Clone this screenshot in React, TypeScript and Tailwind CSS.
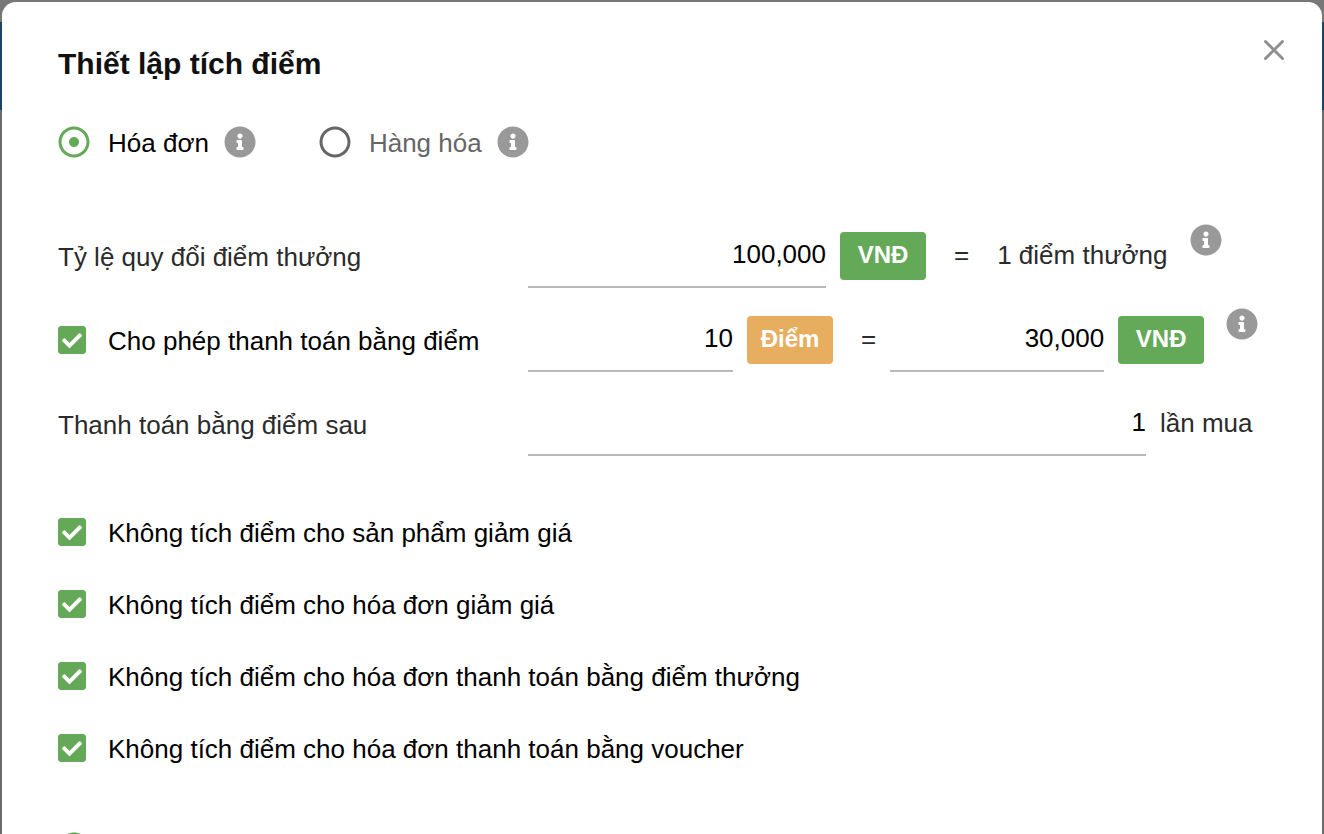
import { useState } from "react";
import type { ReactNode } from "react";
import { FaCheckSquare, FaInfoCircle, FaRegCircle, FaRegDotCircle, FaRegSquare } from "react-icons/fa";

function Info({ label }: { label: string }) {
  return (
    <button type="button" aria-label={label} className="shrink-0 text-[#999999]">
      <FaInfoCircle size={32} />
    </button>
  );
}

function Radio({
  label,
  name,
  checked,
  onChange,
  children,
}: {
  label: string;
  name: string;
  checked: boolean;
  onChange: () => void;
  children?: ReactNode;
}) {
  return (
    <label className={`flex h-10 cursor-pointer items-center gap-[18px] ${checked ? "text-black" : "text-[#666666]"}`}>
      <span className="grid size-8 shrink-0">
        <input
          type="radio"
          name={name}
          aria-label={label}
          checked={checked}
          onChange={onChange}
          className="col-start-1 row-start-1 size-8 appearance-none rounded-full"
        />
        <span className="pointer-events-none col-start-1 row-start-1">
          {checked ? <FaRegDotCircle size={32} className="text-[#64a958]" /> : <FaRegCircle size={32} />}
        </span>
      </span>
      {children && <span className="pt-[2px]">{children}</span>}
    </label>
  );
}

function Checkbox({ label }: { label: string }) {
  const [checked, setChecked] = useState(true);
  return (
    <label className="flex h-10 cursor-pointer items-center gap-[22px] text-black">
      <span className="grid h-8 w-7 shrink-0">
        <input
          type="checkbox"
          checked={checked}
          onChange={() => setChecked(!checked)}
          className="col-start-1 row-start-1 h-8 w-7 appearance-none"
        />
        <span className="pointer-events-none col-start-1 row-start-1 text-[#64a958]">
          {checked ? <FaCheckSquare className="h-8 w-7" /> : <FaRegSquare className="h-8 w-7" />}
        </span>
      </span>
      <span className="pt-[2px]">{label}</span>
    </label>
  );
}

function NumberField({ id, label, value, width }: { id: string; label: string; value: string; width: string }) {
  return (
    <input
      id={id}
      aria-label={label}
      type="text"
      inputMode="numeric"
      defaultValue={value}
      className={`h-16 min-w-0 border-b-2 border-[#b9b9b9] bg-transparent pb-[2px] text-right text-black outline-none ${width}`}
    />
  );
}

function Unit({ children, tone }: { children: ReactNode; tone: string }) {
  return (
    <span
      className={`flex h-12 w-[86px] shrink-0 items-center justify-center rounded pb-[2px] text-[24px] font-bold text-white ${tone}`}
    >
      {children}
    </span>
  );
}

function Row({ label, children }: { label: ReactNode; children: ReactNode }) {
  return (
    <div className="flex h-16 items-center">
      <div className="w-[470px] shrink-0">{label}</div>
      <div className="flex min-w-0 grow items-center">{children}</div>
    </div>
  );
}

const exclusions = [
  "Không tích điểm cho sản phẩm giảm giá",
  "Không tích điểm cho hóa đơn giảm giá",
  "Không tích điểm cho hóa đơn thanh toán bằng điểm thưởng",
  "Không tích điểm cho hóa đơn thanh toán bằng voucher",
];

export default function App() {
  const [mode, setMode] = useState("invoice");
  return (
    <div className="relative h-screen overflow-hidden bg-[#6b6b6b] font-['Liberation_Sans',Arial,sans-serif] text-[26px] leading-10 text-[#2b2b2b]">
      <div className="absolute inset-x-0 top-0 border-t-[22px] border-[#777777]">
        <div className="h-[88px] bg-[#17446b]" />
      </div>
      <div
        role="dialog"
        aria-labelledby="title"
        className="relative mx-[2px] mt-[2px] rounded-t-[14px] bg-white px-14 pt-[42px] pb-14"
      >
        <header className="flex items-start justify-between">
          <h1 id="title" className="text-[30px] font-bold text-[#111111]">
            Thiết lập tích điểm
          </h1>
          <button type="button" aria-label="Đóng" className="-mt-2 -mr-[22px] p-[2px] text-[#8f8f8f]">
            <svg className="size-6" viewBox="0 0 24 24" fill="none" stroke="currentColor" strokeWidth="3" strokeLinecap="round">
              <path d="M3.5 3.5l17 17M20.5 3.5l-17 17" />
            </svg>
          </button>
        </header>

        <div className="mt-[38px] flex gap-[63px]">
          <div className="flex items-center gap-[15px]">
            <Radio label="Hóa đơn" name="mode" checked={mode === "invoice"} onChange={() => setMode("invoice")}>
              Hóa đơn
            </Radio>
            <Info label="Thông tin hóa đơn" />
          </div>
          <div className="flex items-center gap-[15px]">
            <Radio label="Hàng hóa" name="mode" checked={mode === "product"} onChange={() => setMode("product")}>
              Hàng hóa
            </Radio>
            <Info label="Thông tin hàng hóa" />
          </div>
        </div>

        <div className="mt-[62px] flex flex-col gap-5">
          <Row label={<label htmlFor="rate" className="block pt-[2px]">Tỷ lệ quy đổi điểm thưởng</label>}>
            <NumberField id="rate" label="Tỷ lệ quy đổi điểm thưởng" value="100,000" width="w-[298px]" />
            <div className="ml-[14px] flex items-center">
              <Unit tone="bg-[#64a958]">VNĐ</Unit>
              <span className="ml-7 pb-[2px]">=</span>
              <span className="ml-7 pb-[2px]">1 điểm thưởng</span>
            </div>
            <div className="mb-8 ml-[22px] flex">
              <Info label="Thông tin tỷ lệ quy đổi" />
            </div>
          </Row>
          <Row label={<Checkbox label="Cho phép thanh toán bằng điểm" />}>
            <NumberField id="points" label="Số điểm" value="10" width="w-[205px]" />
            <div className="ml-[14px] flex items-center">
              <Unit tone="bg-[#e8ae60]">Điểm</Unit>
              <span className="mr-[14px] ml-7 pb-[2px]">=</span>
            </div>
            <NumberField id="amount" label="Số tiền" value="30,000" width="w-[214px]" />
            <div className="ml-[14px] flex items-center">
              <Unit tone="bg-[#64a958]">VNĐ</Unit>
            </div>
            <div className="mb-8 ml-[22px] flex">
              <Info label="Thông tin thanh toán bằng điểm" />
            </div>
          </Row>
          <Row label={<label htmlFor="after" className="block pt-[2px]">Thanh toán bằng điểm sau</label>}>
            <NumberField id="after" label="Thanh toán bằng điểm sau" value="1" width="w-[618px]" />
            <span className="ml-[14px] shrink-0 pb-[2px]">lần mua</span>
          </Row>
        </div>

        <div className="mt-14 flex flex-col gap-8">
          {exclusions.map((text) => (
            <Checkbox key={text} label={text} />
          ))}
        </div>

        <div className="mt-[60px]">
          <Radio label="Toàn bộ khách hàng" name="customers" checked onChange={() => undefined} />
        </div>
      </div>
    </div>
  );
}
